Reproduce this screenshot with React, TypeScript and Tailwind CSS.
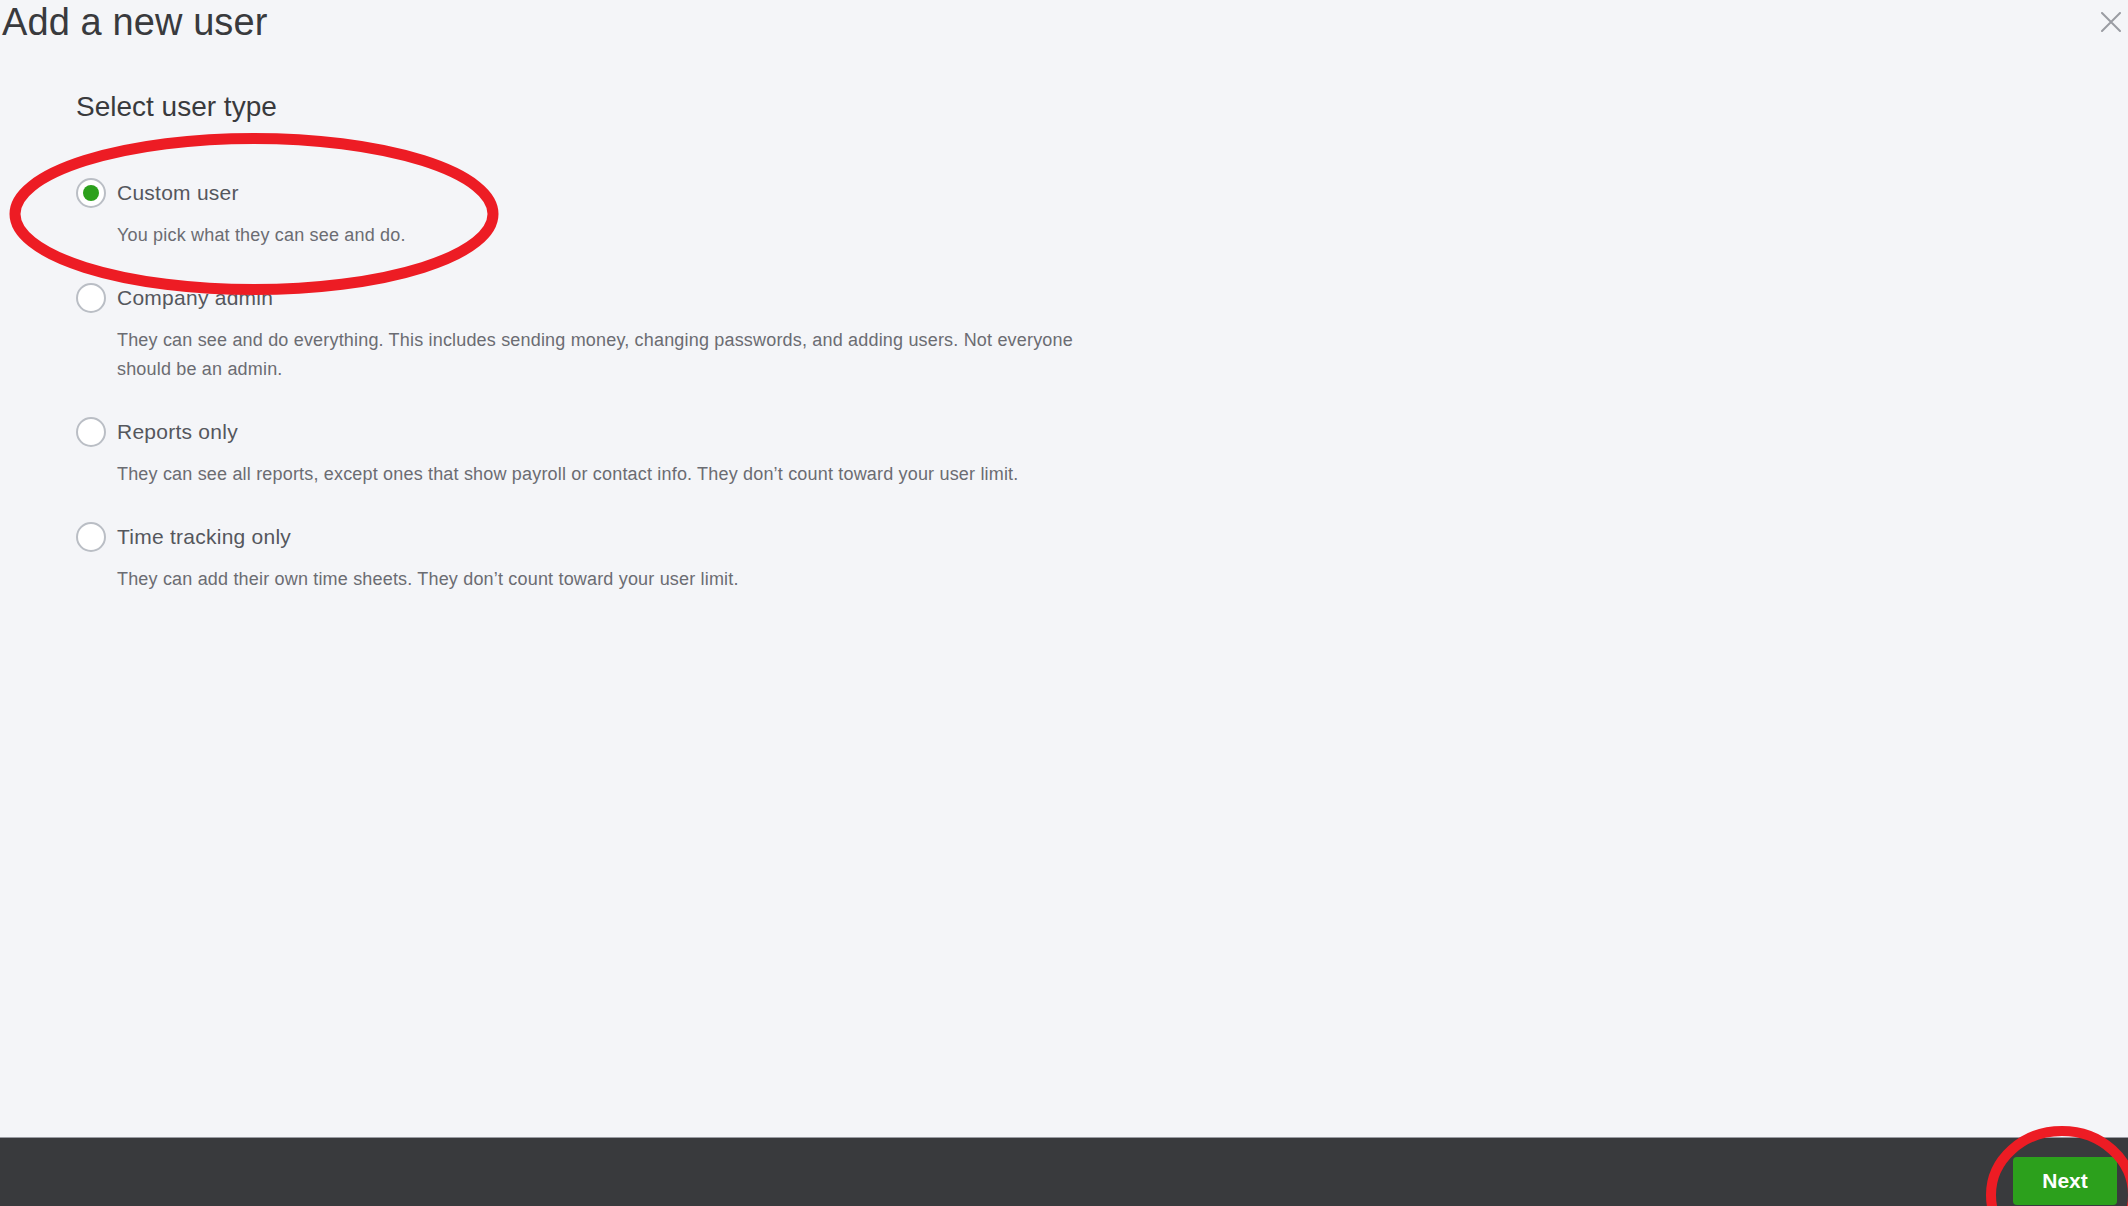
import React from "react";

type Opt = { label: string; desc: string; selected?: boolean };

const options: Opt[] = [
  { label: "Custom user", desc: "You pick what they can see and do.", selected: true },
  {
    label: "Company admin",
    desc: "They can see and do everything. This includes sending money, changing passwords, and adding users. Not everyone should be an admin.",
  },
  {
    label: "Reports only",
    desc: "They can see all reports, except ones that show payroll or contact info. They don\u2019t count toward your user limit.",
  },
  {
    label: "Time tracking only",
    desc: "They can add their own time sheets. They don\u2019t count toward your user limit.",
  },
];

function Radio({ selected }: { selected?: boolean }) {
  return (
    <div className="w-[30px] h-[30px] rounded-full bg-white border-2 border-[#babec5] flex items-center justify-center shrink-0">
      {selected && <div className="w-[16px] h-[16px] rounded-full bg-[#2ca01c]" />}
    </div>
  );
}

export default function App() {
  return (
    <div
      className="relative w-full h-[1206px] flex flex-col overflow-hidden bg-[#f4f5f8]"
      style={{ fontFamily: '"Liberation Sans", Arial, sans-serif' }}
    >
      <div className="flex-1 relative">
        <div className="flex items-start justify-between">
          <h1 className="ml-[2px] mt-[3px] text-[38px] leading-[38px] text-[#393a3d] font-normal tracking-[0.1px]">
            Add a new user
          </h1>
          <button className="mt-[12px] mr-[7px] w-[20px] h-[20px] flex items-center justify-center">
            <svg width="20" height="20" viewBox="0 0 20 20">
              <path d="M1 1 L19 19 M19 1 L1 19" stroke="#9a9ca3" strokeWidth="2" strokeLinecap="round" />
            </svg>
          </button>
        </div>

        <div className="ml-[76px] mt-[52px]">
          <h2 className="text-[28px] leading-[28px] text-[#393a3d] font-normal">Select user type</h2>

          <div className="mt-[57px] flex flex-col gap-[33px]">
            {options.map((o) => (
              <div key={o.label} className="flex flex-col">
                <div className="flex items-center h-[30px] gap-[11px]">
                  <Radio selected={o.selected} />
                  <span className="text-[21px] leading-[30px] text-[#55575d] tracking-[0.25px]">{o.label}</span>
                </div>
                <p className="mt-[13px] ml-[41px] max-w-[1000px] text-[18px] leading-[29px] text-[#6b6c72] tracking-[0.18px]">
                  {o.desc}
                </p>
              </div>
            ))}
          </div>
        </div>
      </div>

      <div className="h-[69px] shrink-0 bg-[#393a3d] border-t border-[#9a9ca3] flex items-start justify-end pr-[11px] pt-[19px]">
        <button className="w-[104px] h-[48px] rounded-[4px] bg-[#2ca01c] text-white font-bold text-[21px] leading-[46px] text-center">
          Next
        </button>
      </div>

      <svg
        className="absolute inset-0 pointer-events-none"
        width="2128"
        height="1206"
        viewBox="0 0 2128 1206"
      >
        <ellipse cx="254" cy="214" rx="239" ry="75.5" fill="none" stroke="#ed1c24" strokeWidth="11" />
        <ellipse cx="2062" cy="1195" rx="71" ry="64" fill="none" stroke="#ed1c24" strokeWidth="10" />
      </svg>
    </div>
  );
}
